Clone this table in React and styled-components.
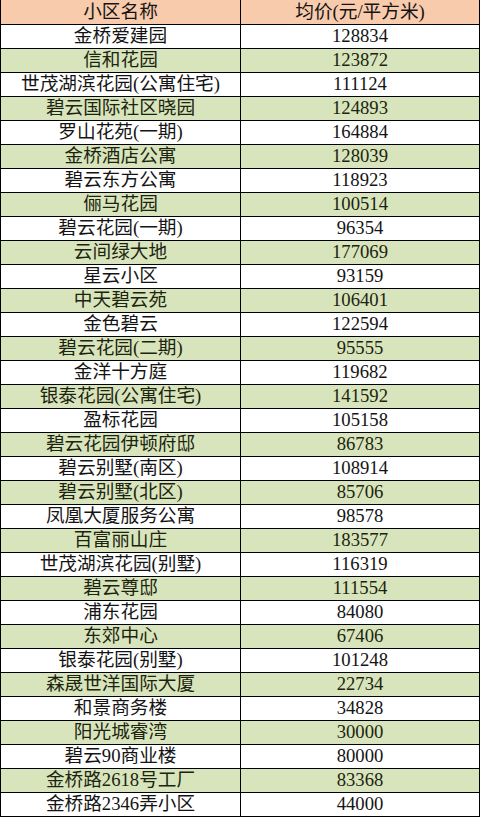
import React from "react";
import styled, { createGlobalStyle } from "styled-components";

const Global = createGlobalStyle`
  html, body { margin: 0; padding: 0; background: #ffffff; }
  body { font-family: "Liberation Serif", "Noto Sans CJK SC", serif; }
`;

const rows = [
  ["金桥爱建园", "128834"],
  ["信和花园", "123872"],
  ["世茂湖滨花园(公寓住宅)", "111124"],
  ["碧云国际社区晓园", "124893"],
  ["罗山花苑(一期)", "164884"],
  ["金桥酒店公寓", "128039"],
  ["碧云东方公寓", "118923"],
  ["俪马花园", "100514"],
  ["碧云花园(一期)", "96354"],
  ["云间绿大地", "177069"],
  ["星云小区", "93159"],
  ["中天碧云苑", "106401"],
  ["金色碧云", "122594"],
  ["碧云花园(二期)", "95555"],
  ["金洋十方庭", "119682"],
  ["银泰花园(公寓住宅)", "141592"],
  ["盈标花园", "105158"],
  ["碧云花园伊顿府邸", "86783"],
  ["碧云别墅(南区)", "108914"],
  ["碧云别墅(北区)", "85706"],
  ["凤凰大厦服务公寓", "98578"],
  ["百富丽山庄", "183577"],
  ["世茂湖滨花园(别墅)", "116319"],
  ["碧云尊邸", "111554"],
  ["浦东花园", "84080"],
  ["东郊中心", "67406"],
  ["银泰花园(别墅)", "101248"],
  ["森晟世洋国际大厦", "22734"],
  ["和景商务楼", "34828"],
  ["阳光城睿湾", "30000"],
  ["碧云90商业楼", "80000"],
  ["金桥路2618号工厂", "83368"],
  ["金桥路2346弄小区", "44000"],
];

const Sheet = styled.div`
  width: 480px;
  display: grid;
  grid-template-columns: 240px 239px;
  border-left: 1px solid #000;
  box-sizing: border-box;
`;

const Cell = styled.div`
  box-sizing: border-box;
  height: ${(p) => (p.$head ? 25 : 24)}px;
  border-right: 1px solid #000;
  border-bottom: 1px solid #000;
  background: ${(p) =>
    p.$head ? "#f8cbad" : p.$alt ? "#d8e4bc" : "#ffffff"};
  display: flex;
  align-items: flex-end;
  justify-content: center;
  padding-bottom: 1px;
  font-size: 18.67px;
  line-height: 22px;
  color: ${(p) => (p.$alt ? "#1c2410" : "#141414")};
  white-space: nowrap;
  overflow: hidden;
`;

export default function App() {
  return (
    <>
      <Global />
      <Sheet>
        <Cell $head>小区名称</Cell>
        <Cell $head>均价(元/平方米)</Cell>
        {rows.map(([name, price], i) => (
          <React.Fragment key={name}>
            <Cell $alt={i % 2 === 1}>{name}</Cell>
            <Cell $alt={i % 2 === 1}>{price}</Cell>
          </React.Fragment>
        ))}
      </Sheet>
    </>
  );
}
